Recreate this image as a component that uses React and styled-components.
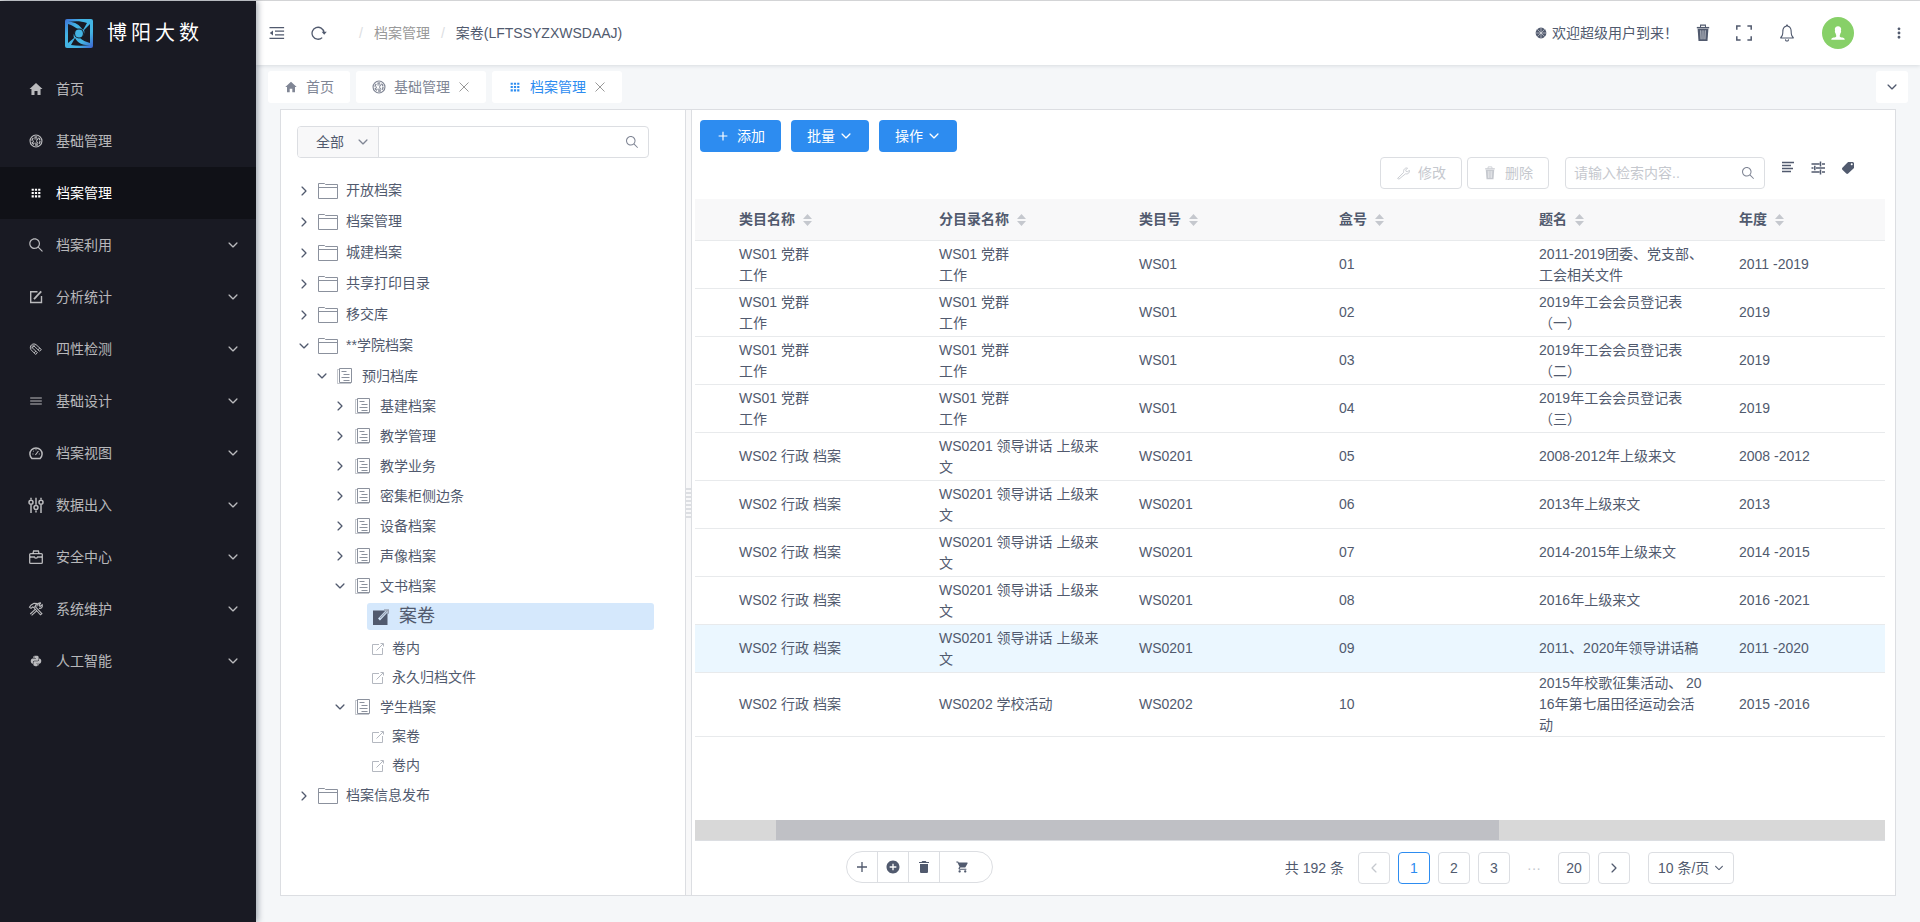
import React from "react";
import styled, { createGlobalStyle, css } from "styled-components";
import {
  IoMdHome, IoMdApps, IoIosSearch, IoIosMenu, IoLogoPython,
  IoIosArrowDown, IoIosArrowForward, IoIosArrowBack, IoIosNotificationsOutline,
  IoMdMore, IoIosPerson, IoMdAdd, IoMdAddCircle, IoMdTrash, IoMdCart,
  IoMdPricetag,
} from "react-icons/io";

const line = "#dcdee2";
const ink = "#515a6e";

const GlobalStyle = createGlobalStyle`
  *, *::before, *::after { box-sizing: border-box; }
  body {
    margin: 0;
    background: #f5f7f9;
    color: ${ink};
    font-family: "Liberation Sans", "Noto Sans CJK SC", sans-serif;
    font-size: 14px;
    line-height: 21px;
  }
  button, input, select { font: inherit; color: inherit; margin: 0; }
  button { cursor: pointer; padding: 0; border: 0; background: none; }
  a { color: inherit; text-decoration: none; }
  ul { list-style: none; margin: 0; padding: 0; }
  svg { display: block; flex: none; }
`;

/* ---------- drawn icons ---------- */
const Svg = ({ size = 16, children, ...rest }) => (
  <svg width={size} height={size} viewBox="0 0 16 16" fill="none" stroke="currentColor" strokeWidth="1" aria-hidden="true" {...rest}>
    {children}
  </svg>
);
const ShutterIcon = ({ size }) => (
  <Svg size={size}>
    <circle cx="8" cy="8" r="6.8" strokeWidth="1.3" />
    <circle cx="8" cy="8" r="4.6" strokeWidth="1.5" strokeDasharray="3.4 1.4" />
    <path d="M6 5.600h4L8.500 8l1.500 2.500H6M5 7.500v2" strokeWidth="1.100" />
  </Svg>
);
const EditIcon = () => (
  <Svg size={16} strokeWidth="1.4"><path d="M9.500 2.700H2.700v10.800h10.800V7" /><path d="M6 10.200 13.200 2.400" strokeWidth="1.800" /></Svg>
);
const MagnetIcon = () => (
  <Svg strokeWidth="1">
    <path d="M7.600 13.400 2.900 8.600C.8 5.200 4.600 1.400 8 3.600l5.400 5" />
    <path d="M9.400 11.800 5 7.400C3.900 6 5.400 4.600 6.800 5.600l4.600 4.600" />
    <path d="m7.600 13.400 1.800-1.600M13.400 8.600l-2 1.600M6.200 11.900l1.700-1.700M11.800 7l-1.700 1.700" />
    <path d="M4 7.800C3 5.600 5 3.600 7.200 4.600" strokeWidth="1.400" opacity=".5" />
  </Svg>
);
const GaugeIcon = () => (
  <Svg strokeWidth="1.500"><path d="M4 13.600a6.100 6.100 0 1 1 8 0z" /><path d="m7.400 10 3-4M4.400 9h1M10.800 9h1M8 4.200v1M5.200 5.800l.6.600" strokeWidth="1.100" /></Svg>
);
const SlidersIcon = () => (
  <Svg strokeWidth="1.500"><path d="M3 .8v1.600M3 8v8M8 .8v7M8 13.400V15.600M13 .8v1.600M13 8v8" /><circle cx="3" cy="5.200" r="2" /><circle cx="8" cy="10.600" r="2" /><circle cx="13" cy="5.200" r="2" /></Svg>
);
const CaseIcon = () => (
  <Svg strokeWidth="1.300"><rect x="1.700" y="4.600" width="12.600" height="9.800" rx="1" /><path d="M5 4.400 5.600 2h4.800l.6 2.400M2 8h4.400a1.700 1.700 0 0 0 3.200 0H14" /></Svg>
);
const ToolsIcon = () => (
  <Svg strokeWidth="1.100">
    <path d="M1.500 6.200 3.200 4 6 2.200l3 .2-1.400 1.800-.6 1.400-1.200 1L4.600 6 3 7.400z" />
    <path d="m6.200 7 6.200 6.800 1.500-1.200-6.600-7" />
    <path d="m2.200 13 5-4.600M3.600 14.400l5-4.600" />
    <path d="M13 2 10.900 4.100l1.200 1.300L14.200 3.600c.7 2.400-1 4.200-3.200 3.700M9 5.600C8.600 3.400 10.600 1.500 13 2" />
  </Svg>
);
const OutdentIcon = () => (
  <Svg strokeWidth="1.300"><path d="M.5 2.600h14.600M6 6.200h9.100M6 9.800h9.100M.5 13.400h14.600" /><path d="M4 5.400v5.200L.8 8z" fill="currentColor" stroke="none" /></Svg>
);
const RefreshIcon = () => (
  <Svg strokeWidth="1.300"><path d="M11.200 12.600A6 6 0 1 1 13 7.500" /><path d="M10.600 6.800h5.200l-2.600 3z" fill="currentColor" stroke="none" /></Svg>
);
const BinIcon = ({ size }) => (
  <Svg size={size} stroke="none">
    <path d="M2.500 2.600h11v1.300h-11z" fill="currentColor" />
    <path d="M5.800 2.800V1h4.400v1.800" fill="none" stroke="currentColor" strokeWidth=".9" />
    <path d="M3.200 4.300h9.600L12 15.200H4z" fill="currentColor" />
    <path d="M6 5.600l.3 8M8 5.600v8M10 5.600l-.3 8" stroke="#fff" strokeWidth=".8" opacity=".75" />
  </Svg>
);
const ExpandIcon = () => (
  <Svg strokeWidth="1.500"><path d="M.8 4.800V1h3.800M11.400 1h3.800v3.800M15.200 11.200V15h-3.800M4.600 15H.8v-3.800" /></Svg>
);
const BurstIcon = () => (
  <Svg size={12}><circle cx="8" cy="8" r="7.200" fill="currentColor" stroke="none" /><path d="M8 1v14M1 8h14M3 3l10 10M13 3 3 13" stroke="#fff" strokeWidth=".8" opacity=".8" /></Svg>
);
const CloseIcon = () => (
  <svg width="20" height="20" viewBox="0 0 20 20" fill="none" stroke="currentColor" aria-hidden="true"><path d="m5.500 5.500 9 9M14.500 5.500l-9 9" /></svg>
);
const FolderIcon = () => (
  <svg width="20" height="18" viewBox="0 0 20 18" fill="none" stroke="#8b919d" aria-hidden="true">
    <path d="M.5 16.500V1.500h6l1 1h12v14zM.5 5.500h19" />
  </svg>
);
const DocIcon = () => (
  <svg width="16" height="16" viewBox="0 0 16 16" fill="none" stroke="#8b919d" aria-hidden="true">
    <path d="M2.500.5h12v14h-12z" /><path d="M2.500 1.500h-2v14h13.500" opacity=".5" /><path d="M4.500 3.500h5M6.500 6.500h6M4.500 9.500h8M6.500 12.500h6" />
  </svg>
);
const OpenIcon = () => (
  <svg width="12" height="12" viewBox="0 0 12 12" fill="none" stroke="#b4b8c0" aria-hidden="true">
    <path d="M7 1.500H.5v10h10V5M4.500 7.500 11 1M8.500.5h3v3" />
  </svg>
);
const OpenSolidIcon = () => (
  <svg width="16" height="16" viewBox="0 0 16 16" aria-hidden="true">
    <path d="M0 1.500h14.500V16H0z" fill={ink} /><path d="M6 10.500 14.500 1.500" stroke="#d5e8fc" strokeWidth="2.600" /><path d="M7 9.200 15 1M11 .8h4.400v4" stroke="#9aa3b3" strokeWidth="1.200" fill="none" />
  </svg>
);
const WrenchIcon = () => (
  <Svg size={14}><path d="m1.800 14.200 7-7c-.8-3 1.600-5.600 4.400-4.800L11 4.600l.6 1.600 1.800.4 1.800-1.800c.8 3-1.800 5-4.400 4.200L3.400 15z" /></Svg>
);
const LinesIcon = () => (
  <Svg strokeWidth="1.500"><path d="M2 2.500h12M2 5.500h9M2 8.500h11M2 11.500h9" /></Svg>
);
const TuneIcon = () => (
  <Svg strokeWidth="1.500"><path d="M1.500 4h8M12 4h3M10.500 1.500v5M1.500 8h2M6 8h9M4.800 5.800v4.500M1.500 12h8M12 12h3M10.500 9.500v5" /></Svg>
);
const Sorter = () => (
  <svg width="9" height="12" viewBox="0 0 9 12" fill="#c5c8ce" aria-hidden="true"><path d="M4.500 0 9 5H0zM4.500 12 0 7h9z" /></svg>
);
const LogoMark = () => (
  <svg width="28" height="29" viewBox="0 0 28 29" aria-hidden="true">
    <defs>
      <linearGradient id="mark" x1="0" y1="0" x2="1" y2="1"><stop offset="0" stopColor="#3d6fd6" /><stop offset=".3" stopColor="#43b4e3" /><stop offset=".7" stopColor="#43b4e3" /><stop offset="1" stopColor="#3d62d0" /></linearGradient>
    </defs>
    <rect width="28" height="29" rx="2" fill="url(#mark)" />
    <path d="M3 3C9 2.500 14 5 18 11L22 4C16 1.800 9 2 3 3Z" fill="#191a23" />
    <path d="M3 5c4 1 8 4 10 5-4 2-5 6-4 9L3 24z" fill="#191a23" />
    <path d="M25 5v19c-4-1-8-3-10-5 4-2 5-5 4-8z" fill="#191a23" />
    <path d="M25 26c-6 .5-12-1-15-7L6 26c6 1 13 1 19 0Z" fill="#191a23" />
    <circle cx="14" cy="14.500" r="5" fill="#191a23" />
    <circle cx="14" cy="14.500" r="3.900" fill="#43b4e3" />
  </svg>
);

/* ---------- shell ---------- */
const Shell = styled.div`
  display: flex;
  min-height: 100vh;
  border-top: 1px solid #d9dadc;
`;
const Sidebar = styled.aside`
  flex: 0 0 256px;
  background: #191a23;
  box-shadow: 2px 0 6px rgba(0, 21, 41, 0.35);
  z-index: 1;
`;
const Brand = styled.div`
  height: 62px;
  padding: 2px 0 0 65px;
  display: flex;
  align-items: center;
  gap: 14px;
  color: #fff;
  font-size: 20px;
  letter-spacing: 4px;
`;
const MenuLink = styled.a`
  display: grid;
  grid-template-columns: 16px 1fr 14px;
  gap: 12px;
  align-items: center;
  height: 52px;
  padding: 0 16px 0 28px;
  color: ${(p) => (p.$active ? "#fff" : "rgba(255,255,255,.7)")};
  background: ${(p) => (p.$active ? "#101117" : "none")};
`;
const Main = styled.div`
  flex: 1;
  min-width: 0;
  display: flex;
  flex-direction: column;
`;
const Header = styled.header`
  height: 64px;
  background: #fff;
  box-shadow: 0 1px 4px rgba(0, 21, 41, 0.12);
  display: flex;
  align-items: center;
  justify-content: space-between;
  padding: 0 12px 0 13px;
  flex: none;
`;
const HeaderSide = styled.div`
  display: flex;
  align-items: center;
  gap: ${(p) => p.$gap}px;
`;
const IconButton = styled.button`
  display: flex;
  align-items: center;
  justify-content: center;
  color: ${ink};
`;
const Crumbs = styled.nav`
  display: flex;
  gap: 11px;
  padding-left: 6px;
  color: #999;
  i { font-style: normal; color: ${line}; }
  span { color: ${ink}; }
`;
const Welcome = styled.span`
  display: flex;
  align-items: center;
  gap: 5px;
`;
const Avatar = styled.span`
  width: 32px;
  height: 32px;
  margin-right: 12px;
  border-radius: 50%;
  background: #87d068;
  color: #fff;
  display: flex;
  align-items: center;
  justify-content: center;
`;

const TabBar = styled.div`
  display: flex;
  gap: 6px;
  padding: 6px 12px;
`;
const Tab = styled.div`
  display: flex;
  align-items: center;
  gap: 4px;
  height: 32px;
  padding: 0 ${(p) => (p.$closable ? 12 : 16)}px 0 16px;
  background: #fff;
  border-radius: 3px;
  color: ${(p) => (p.$active ? "#2d8cf0" : "#808695")};
  a { display: flex; align-items: center; gap: 8px; }
  button { color: #999; }
`;
const TabMenu = styled.button`
  margin-left: auto;
  width: 32px;
  height: 32px;
  background: #fff;
  border-radius: 3px;
  display: flex;
  align-items: center;
  justify-content: center;
`;

/* ---------- split view ---------- */
const Split = styled.div`
  flex: 1;
  display: flex;
  margin: 0 24px 26px;
  border: 1px solid ${line};
  background: #fff;
`;
const TreePane = styled.section`
  flex: 0 0 404px;
  padding: 16px 31px 16px 16px;
`;
const Divider = styled.div`
  flex: 0 0 7px;
  display: flex;
  align-items: center;
  background: #f8f8f9;
  border: solid ${line};
  border-width: 0 1px;
  &::after {
    content: "";
    flex: 1;
    height: 30px;
    background: repeating-linear-gradient(${line} 0 2px, #f8f8f9 2px 4px);
  }
`;
const ListPane = styled.section`
  flex: 1;
  min-width: 0;
  display: flex;
  flex-direction: column;
  padding: 10px 10px 11px 3px;
`;

const frame = css`
  display: flex;
  align-items: center;
  height: 32px;
  border: 1px solid ${line};
  border-radius: 4px;
  background: #fff;
`;
const TreeSearch = styled.form`
  ${frame}
  width: 352px;
  padding-right: 8px;
  color: #808695;
  input { flex: 1; min-width: 0; border: 0; outline: 0; background: none; padding: 0 8px; }
`;
const Picker = styled.label`
  display: flex;
  align-items: center;
  justify-content: space-between;
  height: 100%;
  width: ${(p) => p.$width}px;
  padding: 0 ${(p) => p.$right}px 0 0;
  color: ${ink};
  select {
    appearance: none;
    border: 0;
    outline: 0;
    background: none;
    width: 100%;
    height: 100%;
    padding: 0 0 0 ${(p) => p.$left}px;
  }
`;
const ScopePicker = styled(Picker)`
  background: #f8f8f9;
  border-right: 1px solid ${line};
  border-radius: 3px 0 0 3px;
  svg { color: #808695; }
`;

const Tree = styled.ul`
  padding-top: 17px;
`;
const Branch = styled.ul`
  padding-left: 18px;
`;
const Node = styled.button`
  display: flex;
  align-items: center;
  height: ${(p) => p.$height}px;
  & > svg:first-child { margin-right: ${(p) => p.$gap}px; }
  span { padding-left: ${(p) => p.$gap + 1}px; }
`;
const Leaf = styled.a`
  display: flex;
  align-items: center;
  gap: 8px;
  height: 29px;
  padding-left: 5px;
  margin-left: 16px;
  ${(p) => p.$selected && css`
    height: 27px;
    margin: 2px 0 4px 16px;
    padding-left: 6px;
    gap: 10px;
    font-size: 18px;
    background: #d5e8fc;
    border-radius: 3px;
  `}
`;

/* ---------- list ---------- */
const Actions = styled.div`
  display: flex;
  gap: 10px;
  padding-left: 5px;
`;
const Primary = styled.button`
  height: 32px;
  padding: 0 16px;
  border-radius: 4px;
  background: #2d8cf0;
  color: #fff;
  display: flex;
  align-items: center;
  gap: ${(p) => p.$gap}px;
`;
const Tools = styled.div`
  display: flex;
  justify-content: flex-end;
  gap: 5px;
  padding: 5px 29px 10px 0;
`;
const Plain = styled.button`
  ${frame}
  justify-content: center;
  gap: 8px;
  width: 82px;
  color: #c5c8ce;
`;
const Query = styled.label`
  ${frame}
  width: 200px;
  margin: 0 10px 0 11px;
  padding: 0 8px;
  color: #808695;
  input { flex: 1; min-width: 0; border: 0; outline: 0; background: none; padding: 0; }
  input::placeholder { color: #c5c8ce; opacity: 1; }
`;
const ToolIcons = styled.div`
  display: flex;
  align-items: flex-start;
  gap: 14px;
  padding-top: 3px;
`;
const TableArea = styled.div`
  flex: 1;
`;
const Table = styled.table`
  width: 100%;
  table-layout: fixed;
  border-collapse: separate;
  border-spacing: 0;
  th, td {
    padding: 0 18px;
    border-bottom: 1px solid #e8eaec;
    text-align: left;
    white-space: pre;
  }
  th:first-child, td:first-child { padding: 0; }
  th { height: 42px; background: #f8f8f9; }
  td { height: 48px; }
`;
const HeadCell = styled.span`
  display: flex;
  align-items: center;
  gap: 8px;
`;
const Row = styled.tr`
  background: ${(p) => (p.$on ? "#ebf7ff" : "#fff")};
`;
const ScrollTrack = styled.div`
  height: 21px;
  background: #d8d8d8;
  border-bottom: 1px solid ${line};
  padding: 0 386px 0 81px;
  margin-bottom: 10px;
  div { height: 20px; background: #bfc0c5; }
`;
const Footer = styled.footer`
  display: flex;
  justify-content: space-between;
  padding: 0 151px;
`;
const Pill = styled.div`
  display: flex;
  height: 32px;
  border: 1px solid ${line};
  border-radius: 16px;
`;
const PillButton = styled.button`
  display: flex;
  align-items: center;
  justify-content: center;
  width: ${(p) => p.$width}px;
  padding-right: ${(p) => (p.$width > 40 ? 8 : 0)}px;
  & + & { border-left: 1px solid ${line}; }
`;
const Pager = styled.nav`
  display: flex;
  align-items: center;
  gap: 8px;
  padding-top: 1px;
`;
const Total = styled.span`
  padding-right: 6px;
`;
const PageButton = styled.button`
  width: 32px;
  height: 32px;
  display: flex;
  align-items: center;
  justify-content: center;
  background: #fff;
  border: 1px solid ${(p) => (p.$current ? "#2d8cf0" : p.$bare ? "#fff" : line)};
  border-radius: 4px;
  color: ${(p) => (p.$current ? "#2d8cf0" : p.$muted ? "#c5c8ce" : ink)};
`;
const SizePicker = styled(Picker)`
  ${frame}
  margin-left: 10px;
`;

const menu = [
  ["首页", <IoMdHome size={16} />],
  ["基础管理", <ShutterIcon size={14} />],
  ["档案管理", <IoMdApps size={14} />],
  ["档案利用", <IoIosSearch size={18} />, true],
  ["分析统计", <EditIcon />, true],
  ["四性检测", <MagnetIcon />, true],
  ["基础设计", <IoIosMenu size={16} />, true],
  ["档案视图", <GaugeIcon />, true],
  ["数据出入", <SlidersIcon />, true],
  ["安全中心", <CaseIcon />, true],
  ["系统维护", <ToolsIcon />, true],
  ["人工智能", <IoLogoPython size={14} />, true],
];

const IconSlot = styled.span`
  display: flex;
  justify-content: center;
`;

const Folder = ({ label, open, children }) => (
  <li>
    <Node type="button" $height={31} $gap={7} aria-expanded={!!open}>
      {open ? <IoIosArrowDown size={14} /> : <IoIosArrowForward size={14} />}
      <FolderIcon />
      <span>{label}</span>
    </Node>
    {children}
  </li>
);
const Doc = ({ label, open, children }) => (
  <li>
    <Node type="button" $height={30} $gap={8} aria-expanded={!!open}>
      {open ? <IoIosArrowDown size={14} /> : <IoIosArrowForward size={14} />}
      <DocIcon />
      <span>{label}</span>
    </Node>
    {children}
  </li>
);
const LeafItem = ({ label, selected }) => (
  <li>
    <Leaf href="#" $selected={selected}>
      {selected ? <OpenSolidIcon /> : <OpenIcon />}
      {label}
    </Leaf>
  </li>
);

const columns = ["类目名称", "分目录名称", "类目号", "盒号", "题名", "年度"];
const party = "WS01 党群\n工作";
const admin = "WS02 行政 档案";
const speech = "WS0201 领导讲话 上级来\n文";
const rows = [
  [party, party, "WS01", "01", "2011-2019团委、党支部、\n工会相关文件", "2011 -2019"],
  [party, party, "WS01", "02", "2019年工会会员登记表\n（一）", "2019"],
  [party, party, "WS01", "03", "2019年工会会员登记表\n（二）", "2019"],
  [party, party, "WS01", "04", "2019年工会会员登记表\n（三）", "2019"],
  [admin, speech, "WS0201", "05", "2008-2012年上级来文", "2008 -2012"],
  [admin, speech, "WS0201", "06", "2013年上级来文", "2013"],
  [admin, speech, "WS0201", "07", "2014-2015年上级来文", "2014 -2015"],
  [admin, speech, "WS0201", "08", "2016年上级来文", "2016 -2021"],
  [admin, speech, "WS0201", "09", "2011、2020年领导讲话稿", "2011 -2020"],
  [admin, "WS0202 学校活动", "WS0202", "10", "2015年校歌征集活动、 20\n16年第七届田径运动会活\n动", "2015 -2016"],
];

export default function App() {
  return (
    <>
      <GlobalStyle />
      <Shell>
        <Sidebar>
          <Brand><LogoMark />博阳大数</Brand>
          <nav>
            {menu.map(([label, icon, nested]) => (
              <MenuLink href="#" key={label} $active={label === "档案管理"}>
                <IconSlot>{icon}</IconSlot>
                {label}
                {nested && <IoIosArrowDown size={14} />}
              </MenuLink>
            ))}
          </nav>
        </Sidebar>

        <Main>
          <Header>
            <HeaderSide $gap={26}>
              <IconButton type="button" aria-label="收起菜单"><OutdentIcon /></IconButton>
              <IconButton type="button" aria-label="刷新"><RefreshIcon /></IconButton>
              <Crumbs>
                <i>/</i>
                <a href="#">档案管理</a>
                <i>/</i>
                <span>案卷(LFTSSYZXWSDAAJ)</span>
              </Crumbs>
            </HeaderSide>
            <HeaderSide $gap={16}>
              <Welcome><BurstIcon />欢迎超级用户到来！</Welcome>
              <HeaderSide $gap={24}>
                <IconButton type="button" aria-label="回收站"><BinIcon size={18} /></IconButton>
                <IconButton type="button" aria-label="全屏"><ExpandIcon /></IconButton>
                <IconButton type="button" aria-label="通知"><IoIosNotificationsOutline size={22} /></IconButton>
                <Avatar><IoIosPerson size={18} /></Avatar>
                <IconButton type="button" aria-label="更多"><IoMdMore size={18} /></IconButton>
              </HeaderSide>
            </HeaderSide>
          </Header>

          <TabBar>
            <Tab><a href="#"><IoMdHome size={14} />首页</a></Tab>
            <Tab $closable>
              <a href="#"><ShutterIcon size={14} />基础管理</a>
              <button type="button" aria-label="关闭"><CloseIcon /></button>
            </Tab>
            <Tab $closable $active>
              <a href="#"><IoMdApps size={14} />档案管理</a>
              <button type="button" aria-label="关闭"><CloseIcon /></button>
            </Tab>
            <TabMenu type="button" aria-label="标签菜单"><IoIosArrowDown size={14} /></TabMenu>
          </TabBar>

          <Split>
            <TreePane>
              <TreeSearch>
                <ScopePicker $width={81} $left={18} $right={8}>
                  <select aria-label="范围"><option>全部</option></select>
                  <IoIosArrowDown size={14} />
                </ScopePicker>
                <input type="text" aria-label="关键词" />
                <IoIosSearch size={16} />
              </TreeSearch>
              <Tree>
                <Folder label="开放档案" />
                <Folder label="档案管理" />
                <Folder label="城建档案" />
                <Folder label="共享打印目录" />
                <Folder label="移交库" />
                <Folder label="**学院档案" open>
                  <Branch>
                    <Doc label="预归档库" open>
                      <Branch>
                        <Doc label="基建档案" />
                        <Doc label="教学管理" />
                        <Doc label="教学业务" />
                        <Doc label="密集柜侧边条" />
                        <Doc label="设备档案" />
                        <Doc label="声像档案" />
                        <Doc label="文书档案" open>
                          <Branch>
                            <LeafItem label="案卷" selected />
                            <LeafItem label="卷内" />
                            <LeafItem label="永久归档文件" />
                          </Branch>
                        </Doc>
                        <Doc label="学生档案" open>
                          <Branch>
                            <LeafItem label="案卷" />
                            <LeafItem label="卷内" />
                          </Branch>
                        </Doc>
                      </Branch>
                    </Doc>
                  </Branch>
                </Folder>
                <Folder label="档案信息发布" />
              </Tree>
            </TreePane>

            <Divider />

            <ListPane>
              <Actions>
                <Primary type="button" $gap={7}><IoMdAdd size={14} />添加</Primary>
                <Primary type="button" $gap={4}>批量<IoIosArrowDown size={14} /></Primary>
                <Primary type="button" $gap={4}>操作<IoIosArrowDown size={14} /></Primary>
              </Actions>
              <Tools>
                <Plain type="button" disabled><WrenchIcon />修改</Plain>
                <Plain type="button" disabled><BinIcon size={14} />删除</Plain>
                <Query>
                  <input type="text" placeholder="请输入检索内容.." aria-label="检索内容" />
                  <IoIosSearch size={16} />
                </Query>
                <ToolIcons>
                  <IconButton type="button" aria-label="密度"><LinesIcon /></IconButton>
                  <IconButton type="button" aria-label="筛选"><TuneIcon /></IconButton>
                  <IconButton type="button" aria-label="标签"><IoMdPricetag size={16} /></IconButton>
                </ToolIcons>
              </Tools>

              <TableArea>
                <Table>
                  <colgroup>
                    <col width="26" />
                    {columns.slice(1).map((c) => <col key={c} width="200" />)}
                    <col />
                  </colgroup>
                  <thead>
                    <tr>
                      <th />
                      {columns.map((c) => <th key={c} scope="col"><HeadCell>{c}<Sorter /></HeadCell></th>)}
                    </tr>
                  </thead>
                  <tbody>
                    {rows.map((r) => (
                      <Row key={r[3]} $on={r[3] === "09"}>
                        <td />
                        {r.map((cell, i) => <td key={columns[i]}>{cell}</td>)}
                      </Row>
                    ))}
                  </tbody>
                </Table>
              </TableArea>

              <ScrollTrack><div /></ScrollTrack>
              <Footer>
                <Pill>
                  <PillButton type="button" $width={30} aria-label="新增"><IoMdAdd size={16} /></PillButton>
                  <PillButton type="button" $width={31} aria-label="加入"><IoMdAddCircle size={16} /></PillButton>
                  <PillButton type="button" $width={31} aria-label="删除"><IoMdTrash size={16} /></PillButton>
                  <PillButton type="button" $width={53} aria-label="购物车"><IoMdCart size={14} /></PillButton>
                </Pill>
                <Pager>
                  <Total>共 192 条</Total>
                  <PageButton type="button" $muted aria-label="上一页"><IoIosArrowBack size={14} /></PageButton>
                  <PageButton type="button" $current>1</PageButton>
                  <PageButton type="button">2</PageButton>
                  <PageButton type="button">3</PageButton>
                  <PageButton type="button" $bare $muted>···</PageButton>
                  <PageButton type="button">20</PageButton>
                  <PageButton type="button" aria-label="下一页"><IoIosArrowForward size={14} /></PageButton>
                  <SizePicker $width={86} $left={9} $right={8}>
                    <select aria-label="每页条数"><option>10 条/页</option></select>
                    <IoIosArrowDown size={12} />
                  </SizePicker>
                </Pager>
              </Footer>
            </ListPane>
          </Split>
        </Main>
      </Shell>
    </>
  );
}
